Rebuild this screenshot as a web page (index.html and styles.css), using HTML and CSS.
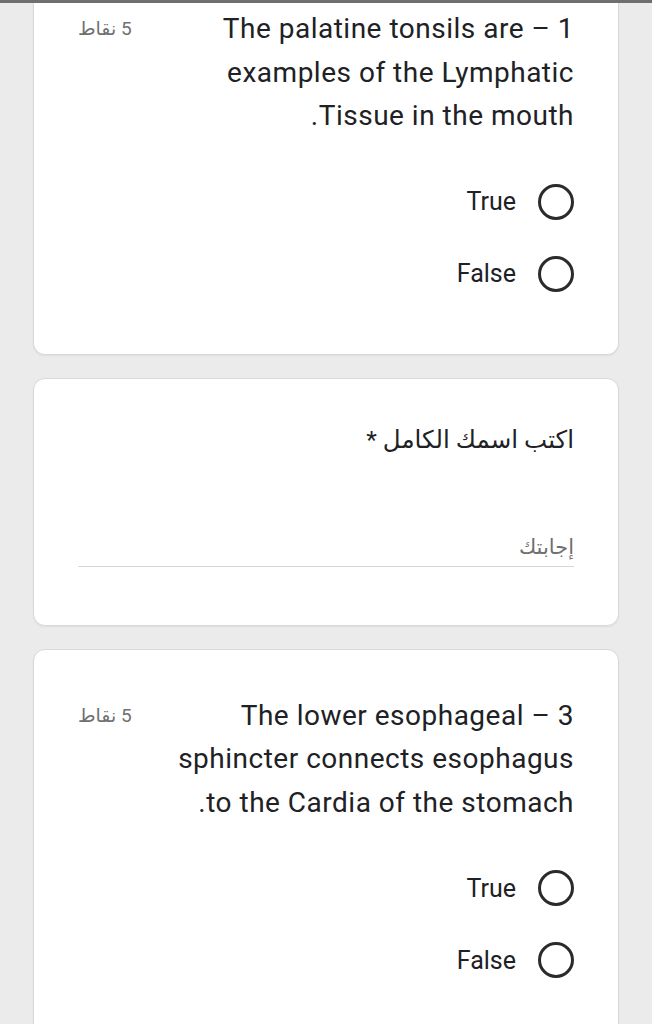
FILE: index.html
```html
<!DOCTYPE html>
<html lang="ar" dir="rtl">
<head>
    <meta charset="UTF-8">
    <meta name="viewport" content="width=device-width, initial-scale=1.0">
    <title>نموذج</title>
    <link rel="stylesheet" href="styles.css">
</head>
<body>
    <div class="topbar"></div>
    <div class="form">

        <div class="card card-cut">
            <div class="question-head">
                <div class="question-title">1 – The palatine tonsils are examples of the Lymphatic Tissue in the mouth.</div>
                <div class="points">5 نقاط</div>
            </div>
            <div class="options">
                <label class="option"><span class="radio"></span><span class="option-text">True</span></label>
                <label class="option"><span class="radio"></span><span class="option-text">False</span></label>
            </div>
        </div>

        <div class="card">
            <div class="field-title">اكتب اسمك الكامل <span class="required">*</span></div>
            <div class="answer">إجابتك</div>
        </div>

        <div class="card">
            <div class="question-head">
                <div class="question-title">3 – The lower esophageal sphincter connects esophagus to the Cardia of the stomach.</div>
                <div class="points">5 نقاط</div>
            </div>
            <div class="options">
                <label class="option"><span class="radio"></span><span class="option-text">True</span></label>
                <label class="option"><span class="radio"></span><span class="option-text">False</span></label>
            </div>
        </div>

    </div>
</body>
</html>
```

FILE: styles.css
```css
body {
    margin: 0;
    background-color: #ebebeb;
    font-family: Roboto, "DejaVu Sans", sans-serif;
    color: #202124;
    height: 1024px;
    overflow: hidden;
}
.topbar {
    height: 3px;
    background-color: #6f6f6f;
}
.form {
    display: flex;
    flex-direction: column;
    gap: 23px;
    padding: 0 33px;
}
.card {
    background-color: #ffffff;
    border: 1px solid #d9d9d9;
    border-radius: 12px;
    box-shadow: 0 1px 2px rgba(0, 0, 0, 0.06);
    padding: 44px;
}
.card-cut {
    border-top: none;
    border-radius: 0 0 12px 12px;
    padding-top: 4px;
}
.question-head {
    display: flex;
    justify-content: space-between;
    align-items: flex-start;
}
.question-title {
    max-width: 420px;
    font-size: 28px;
    letter-spacing: 0.5px;
    line-height: 43.5px;
}
.points {
    font-size: 19px;
    line-height: 43.5px;
    color: #707070;
}
.options {
    display: flex;
    flex-direction: column;
    margin-top: 28px;
}
.option {
    display: flex;
    align-items: center;
    gap: 22px;
    height: 72px;
}
.radio {
    width: 30px;
    height: 30px;
    border: 3px solid #2b2b2b;
    border-radius: 50%;
}
.option-text {
    font-size: 25px;
}
.field-title {
    font-size: 24.5px;
    line-height: 34px;
}
.required {
    color: #202124;
}
.answer {
    margin-top: 78px;
    margin-bottom: 14px;
    padding-bottom: 7px;
    font-size: 21px;
    line-height: 24px;
    color: #707070;
    border-bottom: 1px solid #d6d6d6;
}
```
